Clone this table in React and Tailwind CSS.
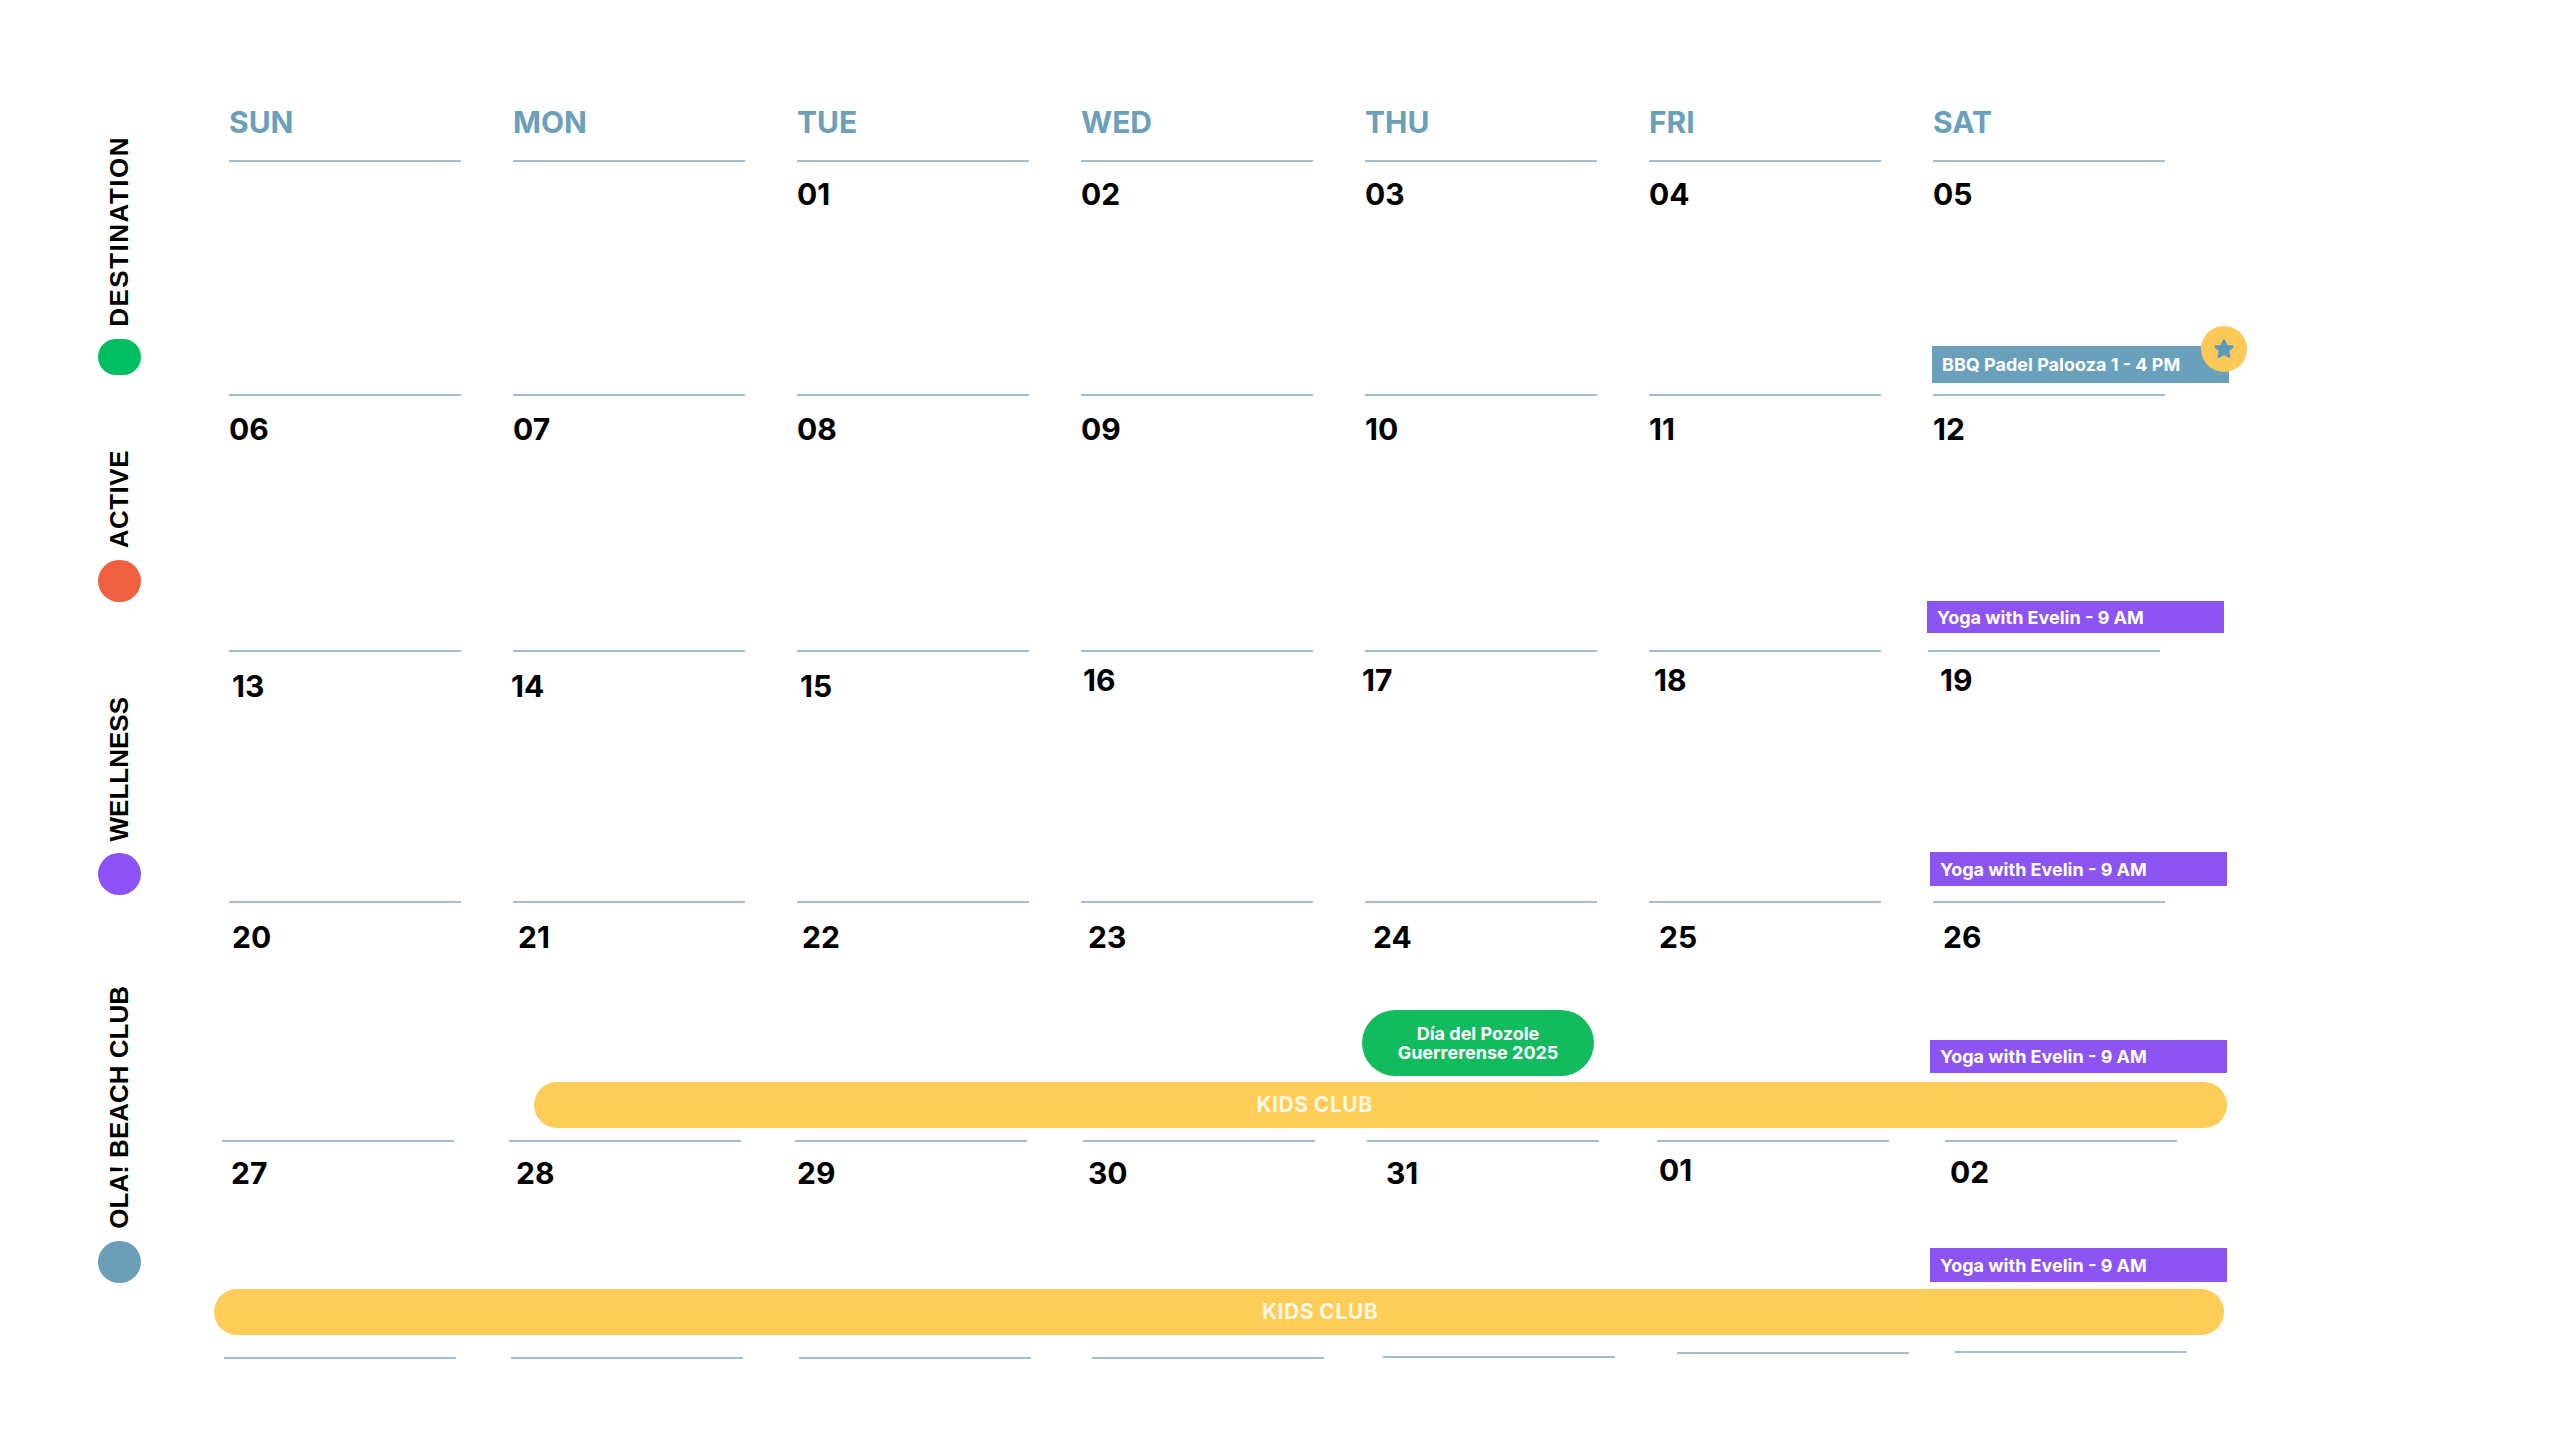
import React from "react";

const LINE = "border-t-2 border-[#a5bdca]";
const COLS = ["col-start-1", "col-start-2", "col-start-3", "col-start-4", "col-start-5", "col-start-6", "col-start-7"];
const DAYS = ["SUN", "MON", "TUE", "WED", "THU", "FRI", "SAT"];

function Star() {
  return (
    <svg width="22" height="22" viewBox="0 0 24 24">
      <polygon
        points="12,3 14.6,9 21,9.5 16.1,13.7 17.6,20.2 12,16.8 6.4,20.2 7.9,13.7 3,9.5 9.4,9"
        fill="#5b9aba"
        stroke="#5b9aba"
        strokeWidth="3"
        strokeLinejoin="round"
      />
    </svg>
  );
}

function Week({ h, days, pt, nx = [], lx = [], children }) {
  return (
    <div className={`grid grid-cols-[repeat(7,232px)] grid-rows-1 gap-x-[52px] ${h}`}>
      {days.map((d, i) => (
        <div key={i} className={`row-start-1 ${COLS[i]} ${LINE} ${lx[i] || ""}`}>
          {d && (
            <div className={`${Array.isArray(pt) ? pt[i] : pt} ${nx[i] || ""} text-[30px] font-bold leading-none text-black`}>
              {d}
            </div>
          )}
        </div>
      ))}
      {children}
    </div>
  );
}

function Yoga({ cls }) {
  return (
    <div className={`row-start-1 col-start-7 self-end bg-[#8c55f2] flex items-center pl-[10px] text-white text-[18px] font-bold whitespace-nowrap ${cls}`}>
      Yoga with Evelin - 9 AM
    </div>
  );
}

function Legend({ slot, label, dot, track = "" }) {
  return (
    <div className={`flex flex-col items-center justify-end ${slot}`}>
      <div className={`[writing-mode:vertical-rl] rotate-180 text-[26px] font-bold leading-none text-black whitespace-nowrap ${track}`}>
        {label}
      </div>
      <div className={`mt-[12px] w-[43px] h-[42px] rounded-full ${dot}`} />
    </div>
  );
}

export default function App() {
  return (
    <div className="w-[2560px] h-[1440px] bg-white flex overflow-hidden font-[family-name:Inter,sans-serif]">
      {/* category legend */}
      <div className="w-[100px] ml-[69px] pt-[136px] flex flex-col font-[family-name:'Liberation_Sans',Arial,sans-serif]">
        <Legend slot="h-[239px]" label="DESTINATION" dot="bg-[#00bf63]" track="tracking-[1.5px]" />
        <Legend slot="h-[227px]" label="ACTIVE" dot="bg-[#ef6040]" track="tracking-[0.5px]" />
        <Legend slot="h-[293px]" label="WELLNESS" dot="bg-[#8c52f5]" />
        <Legend slot="h-[388px]" label="OLA! BEACH CLUB" dot="bg-[#6a9fb7]" />
      </div>

      {/* calendar */}
      <div className="ml-[60px] pt-[107px]">
        <div className="grid grid-cols-[repeat(7,232px)] gap-x-[52px] h-[53px]">
          {DAYS.map((d) => (
            <div key={d} className="text-[30px] font-bold leading-none text-[#6ba0ba]">
              {d}
            </div>
          ))}
        </div>

        <Week h="h-[234px]" days={["", "", "01", "02", "03", "04", "05"]} pt="pt-[17px]">
          <div className="row-start-1 col-start-7 self-end mb-[11px] ml-[-1px] mr-[-64px] h-[37px] bg-[#6aa0bb] relative flex items-center pl-[10px] text-white text-[18px] font-bold whitespace-nowrap">
            BBQ Padel Palooza 1 - 4 PM
            <div className="absolute right-[-18px] top-[-20px] w-[46px] h-[46px] rounded-full bg-[#fcc858] flex items-center justify-center">
              <Star />
            </div>
          </div>
        </Week>

        <Week h="h-[256px]" days={["06", "07", "08", "09", "10", "11", "12"]} pt="pt-[18px]">
          <Yoga cls="mb-[17px] ml-[-6px] mr-[-59px] h-[32px]" />
        </Week>

        <Week
          h="h-[251px]"
          days={["13", "14", "15", "16", "17", "18", "19"]}
          pt={["pt-[19px]", "pt-[19px]", "pt-[19px]", "pt-[13px]", "pt-[13px]", "pt-[13px]", "pt-[13px]"]}
          nx={["ml-[3px]", "ml-[-2px]", "ml-[3px]", "ml-[2px]", "ml-[-3px]", "ml-[5px]", "ml-[12px]"]}
          lx={["", "", "", "", "", "", "-translate-x-[5px]"]}
        >
          <Yoga cls="mb-[15px] ml-[-3px] mr-[-62px] h-[34px]" />
        </Week>

        <Week
          h="h-[239px]"
          days={["20", "21", "22", "23", "24", "25", "26"]}
          pt="pt-[19px]"
          nx={["ml-[3px]", "ml-[5px]", "ml-[5px]", "ml-[7px]", "ml-[8px]", "ml-[10px]", "ml-[10px]"]}
        >
          <div className="row-start-1 col-start-5 self-end mb-[64px] ml-[-3px] mr-[3px] h-[66px] rounded-full bg-[#13bb5f] flex flex-col items-center justify-center text-white text-[18px] font-bold leading-[19px]">
            <span>Día del Pozole</span>
            <span>Guerrerense 2025</span>
          </div>
          <Yoga cls="mb-[67px] ml-[-3px] mr-[-62px] h-[33px]" />
          <div className="row-start-1 col-start-2 col-end-8 self-end mb-[12px] ml-[21px] mr-[-62px] h-[46px] rounded-full bg-[#fdcd58] flex items-center justify-center pr-[132px] text-[#fff7e3] text-[21px] font-bold tracking-[0.5px]">
            KIDS CLUB
          </div>
        </Week>

        <Week
          h="h-[217px]"
          days={["27", "28", "29", "30", "31", "01", "02"]}
          pt={["pt-[16px]", "pt-[16px]", "pt-[16px]", "pt-[16px]", "pt-[16px]", "pt-[13px]", "pt-[15px]"]}
          nx={["ml-[9px]", "ml-[7px]", "ml-[2px]", "ml-[5px]", "ml-[19px]", "ml-[2px]", "ml-[5px]"]}
          lx={["-translate-x-[7px]", "-translate-x-[4px]", "-translate-x-[2px]", "translate-x-[2px]", "translate-x-[2px]", "translate-x-[8px]", "translate-x-[12px]"]}
        >
          <Yoga cls="mb-[75px] ml-[-3px] mr-[-62px] h-[34px]" />
          <div className="row-start-1 col-start-1 col-end-8 self-end mb-[22px] ml-[-15px] mr-[-59px] h-[46px] rounded-full bg-[#fdcd58] flex items-center justify-center pl-[202px] text-[#fff7e3] text-[21px] font-bold tracking-[0.5px]">
            KIDS CLUB
          </div>
        </Week>

        <div className="grid grid-cols-[repeat(7,232px)] gap-x-[52px]">
          {[
            "-translate-x-[5px]",
            "-translate-x-[2px]",
            "translate-x-[2px]",
            "translate-x-[11px]",
            "translate-x-[18px] -translate-y-[1px]",
            "translate-x-[28px] -translate-y-[5px]",
            "translate-x-[22px] -translate-y-[6px]",
          ].map((c, i) => (
            <div key={i} className={`${LINE} ${c}`} />
          ))}
        </div>
      </div>
    </div>
  );
}
